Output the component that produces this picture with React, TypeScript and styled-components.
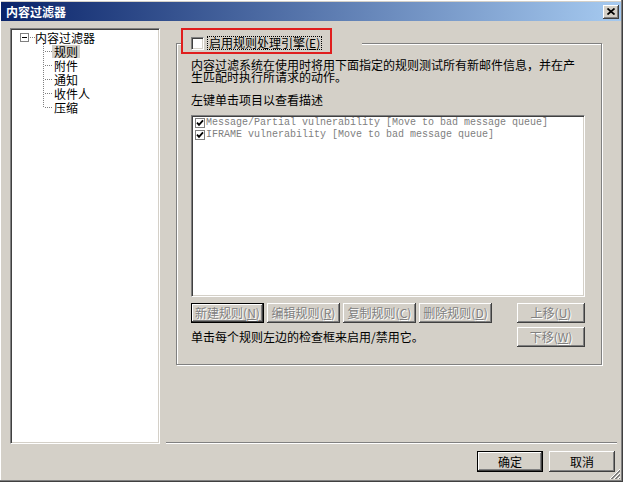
import React from "react";
import styled, { createGlobalStyle } from "styled-components";

const GlobalStyle = createGlobalStyle`
  html, body { margin: 0; padding: 0; background: #d4d0c8; }
  body {
    font-family: "Noto Sans CJK SC", "Noto Sans", sans-serif;
    font-size: 12px;
    color: #000;
  }
  * { box-sizing: border-box; }
`;

const FACE = "#d4d0c8";
const SHADOW = "#808080";
const DARK = "#404040";

const Window = styled.div`
  position: relative;
  width: 623px;
  height: 482px;
  padding: 2px 2px 2px 1px;
  background: ${FACE};
  box-shadow: inset -1px -1px 0 ${DARK}, inset -2px -2px 0 ${SHADOW},
    inset 1px 1px 0 #fff;
  display: flex;
  flex-direction: column;
`;

const TitleBar = styled.div`
  height: 19px;
  display: flex;
  align-items: center;
  justify-content: space-between;
  padding: 0 2px 0 5px;
  background: linear-gradient(to right, #0a246a, #a6caf0);
`;

const TitleText = styled.span`
  color: #fff;
  font-weight: bold;
  font-size: 12px;
  line-height: 14px;
`;

const CaptionButton = styled.button`
  width: 16px;
  height: 14px;
  padding: 0;
  border: none;
  background: ${FACE};
  box-shadow: inset -1px -1px 0 ${DARK}, inset 1px 1px 0 #fff,
    inset -2px -2px 0 ${SHADOW};
  display: flex;
  align-items: center;
  justify-content: center;
`;

const Body = styled.div`
  display: grid;
  grid-template-columns: 150px 451px;
  grid-template-rows: 416px auto;
  column-gap: 6px;
  padding: 7px 0 0 9px;
`;

const TreePanel = styled.div`
  background: #fff;
  border: 1px solid;
  border-color: ${SHADOW} #fff #fff ${SHADOW};
  box-shadow: inset 1px 1px 0 ${DARK}, inset -1px -1px 0 ${FACE};
  padding: 1px 0 0 1px;
`;

const TreeRootRow = styled.div`
  display: flex;
  align-items: center;
  height: 14px;
  padding-left: 8px;
`;

const TreeChildren = styled.div`
  margin-left: 31px;
  display: flex;
  flex-direction: column;
`;

const TreeRow = styled.div`
  display: flex;
  align-items: center;
  height: 14px;
`;

const TreeLabel = styled.span<{ $selected?: boolean }>`
  height: 13px;
  line-height: 13px;
  padding: 0 2px;
  white-space: nowrap;
  background: ${(p) => (p.$selected ? FACE : "transparent")};
`;

const RightPane = styled.div`
  display: flex;
  flex-direction: column;
`;

const GroupBox = styled.div`
  margin: 15px 15px 0 10px;
  border: 1px solid ${SHADOW};
  box-shadow: 1px 1px 0 #fff, inset 1px 1px 0 #fff;
  padding: 0 16px 17px 14px;
  display: flex;
  flex-direction: column;
`;

const Legend = styled.div`
  margin: -16px 0 0 -10px;
  width: 181px;
  height: 26px;
  background: ${FACE};
  display: flex;
`;

const Annotation = styled.div`
  width: 151px;
  height: 26px;
  border: 2px solid #e01e1e;
  display: flex;
  align-items: center;
  padding: 4px 0 0 8px;
`;

const CheckBox = styled.span`
  width: 13px;
  height: 13px;
  flex: none;
  background: #fff;
  border: 1px solid;
  border-color: ${SHADOW} #fff #fff ${SHADOW};
  box-shadow: inset 1px 1px 0 ${DARK}, inset -1px -1px 0 ${FACE};
`;

const FocusLabel = styled.span`
  margin-left: 4px;
  padding: 0 1px;
  height: 12px;
  line-height: 12px;
  outline: 1px dotted #000;
  outline-offset: 0;
  white-space: nowrap;
`;

const Text = styled.p<{ $gap: number; $max?: number }>`
  margin: ${(p) => p.$gap}px 0 0;
  line-height: 12px;
  max-width: ${(p) => (p.$max ? `${p.$max}px` : "none")};
`;

const ListBox = styled.div`
  margin-top: 9px;
  height: 182px;
  background: #fff;
  border: 1px solid;
  border-color: ${SHADOW} #fff #fff ${SHADOW};
  box-shadow: inset 1px 1px 0 ${DARK}, inset -1px -1px 0 ${FACE};
  padding: 1px 0 0 1px;
`;

const ListItem = styled.div`
  display: flex;
  align-items: center;
  height: 12px;
  padding-left: 2px;
`;

const ListText = styled.span`
  margin-left: 1px;
  font-family: "Liberation Mono", "DejaVu Sans Mono", monospace;
  font-size: 10px;
  line-height: 12px;
  color: #808080;
  white-space: pre;
`;

const ButtonRow = styled.div<{ $gap: number }>`
  margin-top: ${(p) => p.$gap}px;
  display: flex;
  align-items: center;
  justify-content: space-between;
`;

const ButtonGroup = styled.div`
  display: flex;
  gap: 3px;
`;

const Button = styled.button<{ $w: number; $h?: number; $default?: boolean; $disabled?: boolean }>`
  width: ${(p) => p.$w}px;
  height: ${(p) => p.$h ?? 20}px;
  padding: 0;
  border: none;
  background: ${FACE};
  font-family: "Noto Sans CJK SC", "Noto Sans", sans-serif;
  font-size: 12px;
  line-height: 12px;
  display: flex;
  align-items: center;
  justify-content: center;
  white-space: nowrap;
  color: ${(p) => (p.$disabled ? SHADOW : "#000")};
  text-shadow: ${(p) => (p.$disabled ? "1px 1px 0 #fff" : "none")};
  box-shadow: ${(p) =>
    p.$default
      ? `inset 0 0 0 1px #000, inset -2px -2px 0 ${DARK}, inset 2px 2px 0 #fff, inset -3px -3px 0 ${SHADOW}`
      : `inset -1px -1px 0 ${DARK}, inset 1px 1px 0 #fff, inset -2px -2px 0 ${SHADOW}`};
`;

const Separator = styled.div`
  margin-top: auto;
  border-top: 1px solid ${SHADOW};
  border-bottom: 1px solid #fff;
`;

const Footer = styled.div`
  grid-column: 2;
  display: flex;
  justify-content: flex-end;
  gap: 6px;
  padding: 7px 2px 0 0;
`;

const Grip = styled.svg`
  position: absolute;
  right: 2px;
  bottom: 2px;
`;

const Expander = () => (
  <svg width="9" height="9" viewBox="0 0 9 9" shapeRendering="crispEdges">
    <rect x="0.5" y="0.5" width="8" height="8" fill="#fff" stroke="#808080" />
    <line x1="2" y1="4.5" x2="7" y2="4.5" stroke="#000" />
  </svg>
);

const HLine = ({ w }: { w: number }) => (
  <svg width={w} height="14" viewBox={`0 0 ${w} 14`} shapeRendering="crispEdges">
    <line x1="1" y1="7.5" x2={w} y2="7.5" stroke="#808080" strokeDasharray="1 1" />
  </svg>
);

const Connector = ({ last }: { last?: boolean }) => (
  <svg width="9" height="14" viewBox="0 0 9 14" shapeRendering="crispEdges">
    <line x1="0.5" y1="0" x2="0.5" y2={last ? 8 : 14} stroke="#808080" strokeDasharray="1 1" />
    <line x1="2" y1="7.5" x2="9" y2="7.5" stroke="#808080" strokeDasharray="1 1" />
  </svg>
);

const ListCheck = () => (
  <svg width="10" height="10" viewBox="0 0 10 10">
    <rect x="0.5" y="0.5" width="9" height="9" fill="#fff" stroke="#808080" shapeRendering="crispEdges" />
    <polyline points="2,4.6 4,6.8 8,2.4" fill="none" stroke="#000" strokeWidth="1.8" />
  </svg>
);

const CloseGlyph = () => (
  <svg width="8" height="7" viewBox="0 0 8 7">
    <path d="M0.5 0.5 L7.5 6.5 M7.5 0.5 L0.5 6.5" stroke="#000" strokeWidth="1.7" />
  </svg>
);

const treeChildren = ["规则", "附件", "通知", "收件人", "压缩"];
const rules = [
  "Message/Partial vulnerability [Move to bad message queue]",
  "IFRAME vulnerability [Move to bad message queue]",
];
const ruleButtons = [
  { label: "新建规则", key: "N", def: true },
  { label: "编辑规则", key: "R" },
  { label: "复制规则", key: "C" },
  { label: "删除规则", key: "D" },
];

export default function App() {
  return (
    <>
      <GlobalStyle />
      <Window>
        <TitleBar>
          <TitleText>内容过滤器</TitleText>
          <CaptionButton aria-label="close">
            <CloseGlyph />
          </CaptionButton>
        </TitleBar>
        <Body>
          <TreePanel>
            <TreeRootRow>
              <Expander />
              <HLine w={6} />
              <TreeLabel style={{ padding: 0 }}>内容过滤器</TreeLabel>
            </TreeRootRow>
            <TreeChildren>
              {treeChildren.map((c, i) => (
                <TreeRow key={c}>
                  <Connector last={i === treeChildren.length - 1} />
                  <TreeLabel $selected={i === 0}>{c}</TreeLabel>
                </TreeRow>
              ))}
            </TreeChildren>
          </TreePanel>
          <RightPane>
            <GroupBox>
              <Legend>
                <Annotation>
                  <CheckBox />
                  <FocusLabel>
                    启用规则处理引擎(<u>E</u>)
                  </FocusLabel>
                </Annotation>
              </Legend>
              <Text $gap={5} $max={390}>
                内容过滤系统在使用时将用下面指定的规则测试所有新邮件信息，并在产生匹配时执行所请求的动作。
              </Text>
              <Text $gap={11}>左键单击项目以查看描述</Text>
              <ListBox>
                {rules.map((r) => (
                  <ListItem key={r}>
                    <ListCheck />
                    <ListText>{r}</ListText>
                  </ListItem>
                ))}
              </ListBox>
              <ButtonRow $gap={6}>
                <ButtonGroup>
                  {ruleButtons.map((b) => (
                    <Button key={b.key} $w={73} $default={b.def} $disabled>
                      {b.label}(<u>{b.key}</u>)
                    </Button>
                  ))}
                </ButtonGroup>
                <Button $w={68} $disabled>
                  上移(<u>U</u>)
                </Button>
              </ButtonRow>
              <ButtonRow $gap={4}>
                <Text $gap={0}>单击每个规则左边的检查框来启用/禁用它。</Text>
                <Button $w={68} $disabled>
                  下移(<u>W</u>)
                </Button>
              </ButtonRow>
            </GroupBox>
            <Separator />
          </RightPane>
          <Footer>
            <Button $w={66} $h={21} $default>
              确定
            </Button>
            <Button $w={66} $h={21}>
              取消
            </Button>
          </Footer>
        </Body>
        <Grip width="12" height="12" viewBox="0 0 12 12" shapeRendering="crispEdges">
          {[0, 4, 8].map((o) => (
            <g key={o}>
              <line x1={11} y1={1 + o} x2={1 + o} y2={11} stroke="#fff" />
              <line x1={11} y1={2 + o} x2={2 + o} y2={11} stroke="#808080" />
              <line x1={11} y1={3 + o} x2={3 + o} y2={11} stroke="#808080" />
            </g>
          ))}
        </Grip>
      </Window>
    </>
  );
}
